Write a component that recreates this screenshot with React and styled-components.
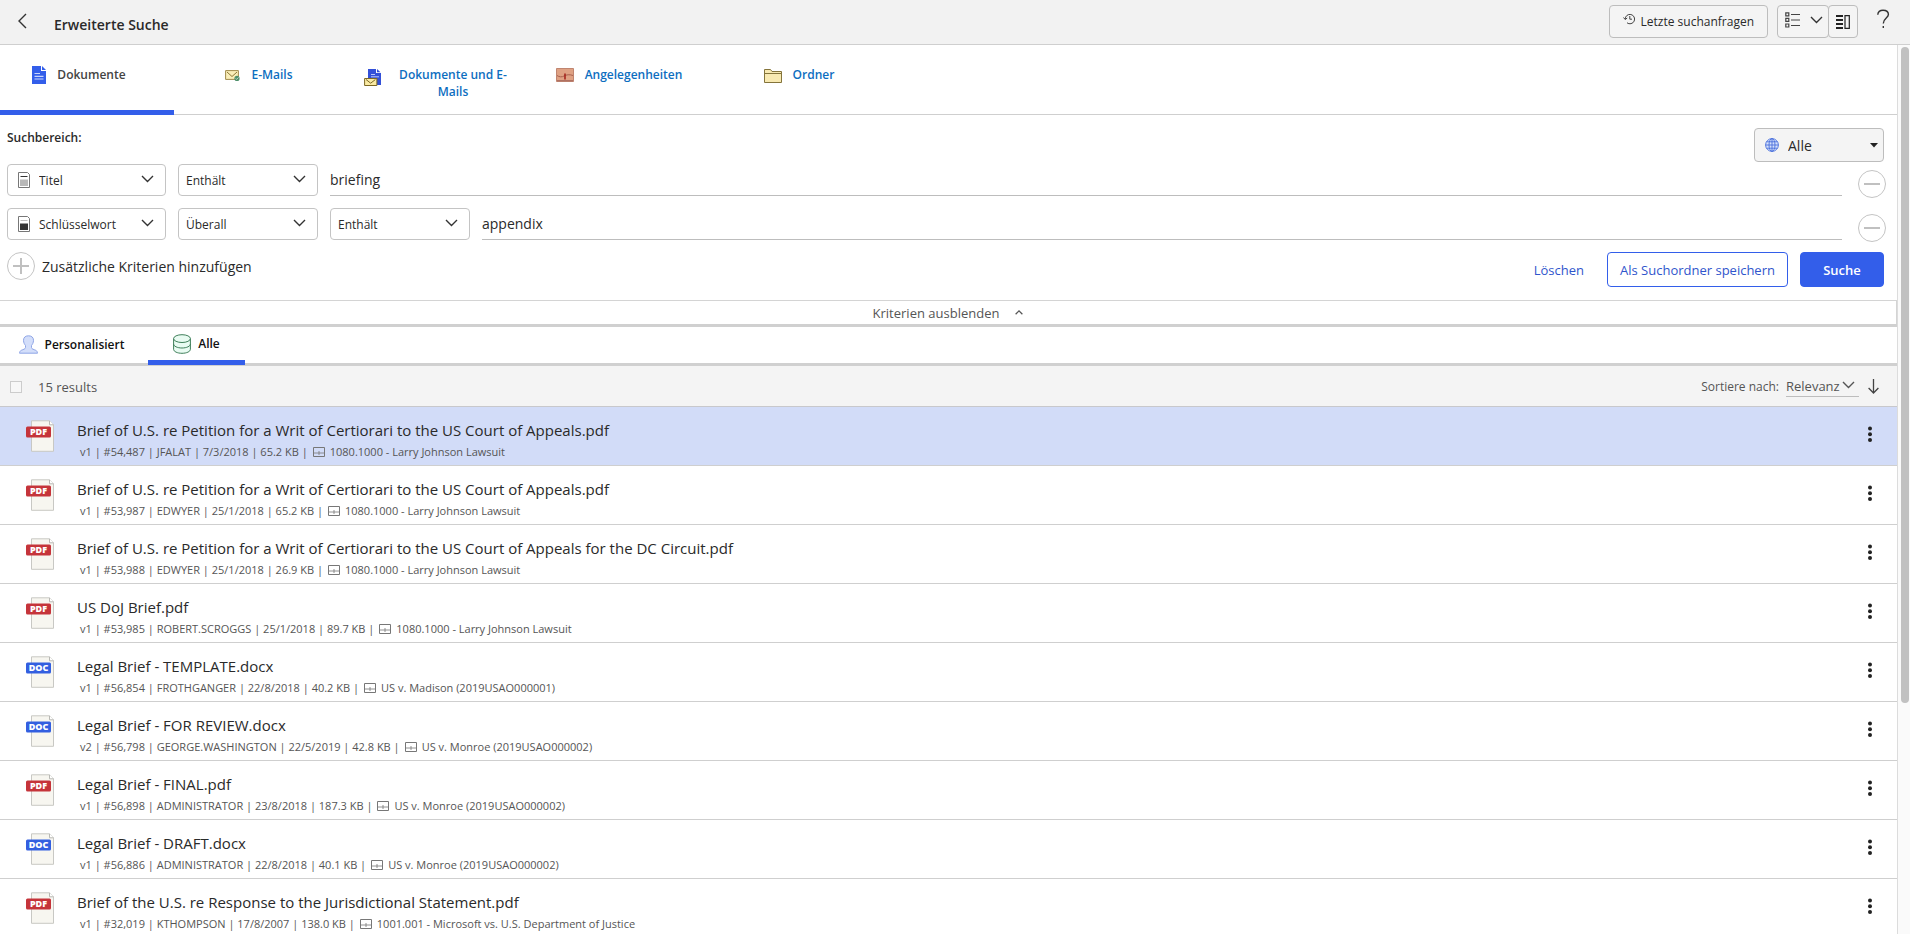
import React, { useState } from 'react';
import styled, { createGlobalStyle, css } from 'styled-components';

const GlobalStyle = createGlobalStyle`
  *,
  *::before,
  *::after {
    box-sizing: border-box;
  }

  body {
    background: #fff;
    color: #2a2a2a;
    font-family: 'Open Sans', 'Noto Sans', sans-serif;
    font-size: 14px;
    margin: 0;
  }

  button,
  input,
  select {
    color: inherit;
    font: inherit;
  }

  button {
    cursor: pointer;
  }

  svg {
    display: block;
    flex: none;
  }
`;

const Page = styled.div`
  display: flex;
  flex-direction: column;
  height: 100vh;
  overflow: hidden;
`;

const Header = styled.header`
  background: #f2f2f2;
  border-bottom: 1px solid #cfcfcf;
  display: flex;
  flex: none;
  height: 45px;
  padding: 5px 19px 0 16px;
`;

const PlainButton = styled.button`
  background: none;
  border: 0;
  padding: 0;
`;

const BackButton = styled(PlainButton)`
  height: 32px;
  width: 12px;
`;

const PageTitle = styled.h1`
  flex: 1;
  font-size: 14px;
  font-weight: 600;
  line-height: 20px;
  margin: 10px 0 0 26px;
`;

const ToolButton = styled.button`
  align-items: center;
  background: #f4f4f4;
  border: 1px solid #bdbdbd;
  border-radius: 4px;
  display: flex;
  font-size: 12px;
  gap: 5px;
  height: 33px;
  justify-content: center;
  padding: 0 ${({ $pad }) => $pad || 6}px;
`;

const ViewButton = styled(ToolButton)`
  gap: 10px;
  padding: 0 5px 4px 7px;
`;

const ToolGroup = styled.div`
  display: flex;
  margin: 0 17px 0 9px;

  > button + button {
    margin-left: -1px;
  }
`;

const HelpButton = styled(PlainButton)`
  height: 28px;
  width: 16px;
`;

const Body = styled.div`
  display: flex;
  flex: 1;
  min-height: 0;
`;

const Main = styled.main`
  border-right: 1px solid #dcdcdc;
  flex: 1;
  min-width: 0;
  overflow: hidden;
`;

const ScrollRail = styled.div`
  background: #fafafa;
  flex: none;
  padding: 2px 1px 0 3px;
  width: 12px;
`;

const ScrollThumb = styled.div`
  background: #c1c1c1;
  border-radius: 4px;
  height: 74%;
`;

const TypeTabs = styled.nav`
  border-bottom: 1px solid #cfcfcf;
  display: flex;
  gap: 6px;
  height: 70px;
`;

const TypeTab = styled(PlainButton)`
  align-items: flex-start;
  color: #0d6ebf;
  display: flex;
  font-size: 12px;
  font-weight: 600;
  gap: 11px;
  height: 70px;
  justify-content: center;
  line-height: 17px;
  padding: 21px 16px 0 0;
  width: 174px;

  ${({ $active }) =>
    $active &&
    css`
      border-bottom: 5px solid #335eea;
      color: #444;
    `}
`;

const TypeLabel = styled.span`
  max-width: 122px;
`;

const Criteria = styled.form`
  padding: 13px 13px 13px 7px;
`;

const ScopeRow = styled.div`
  display: flex;
  height: 36px;
  justify-content: space-between;
`;

const ScopeTitle = styled.div`
  font-size: 12px;
  font-weight: 600;
  line-height: 20px;
`;

const ScopeBox = styled.label`
  align-items: center;
  background: #f4f4f4;
  border: 1px solid #bdbdbd;
  border-radius: 4px;
  display: grid;
  height: 34px;
  width: 130px;

  > * {
    grid-area: 1 / 1;
  }

  > svg {
    pointer-events: none;
  }

  > svg:first-child {
    margin-left: 10px;
  }

  > svg:last-child {
    justify-self: end;
    margin-right: 5px;
  }
`;

const CriteriaRow = styled.div`
  display: flex;
  gap: 12px;
  height: 44px;
`;

const SelectBox = styled.label`
  align-items: center;
  border: 1px solid #c4c4c4;
  border-radius: 4px;
  display: grid;
  flex: none;
  font-size: 12px;
  height: 32px;
  width: ${({ $wide }) => ($wide ? 159 : 140)}px;

  > * {
    grid-area: 1 / 1;
  }

  > svg {
    margin-left: 8px;
    pointer-events: none;
  }

  > svg:last-child {
    justify-self: end;
    margin: 0 11px 3px 0;
  }
`;

const Select = styled.select`
  appearance: none;
  background: none;
  border: 0;
  height: 100%;
  padding: 0 0 0 ${({ $inset }) => $inset || 7}px;
  width: 100%;
`;

const TermInput = styled.input`
  background: none;
  border: 0;
  border-bottom: 1px solid #bdbdbd;
  flex: 1;
  height: 32px;
  min-width: 0;
  outline: 0;
  padding: 0;
`;

const RoundButton = styled.button`
  align-items: center;
  background: #fff;
  border: 1px solid #c4c4c4;
  border-radius: 50%;
  display: flex;
  flex: none;
  height: 28px;
  justify-content: center;
  padding: 0;
  width: 28px;
`;

const RemoveButton = styled(RoundButton)`
  margin: 6px -2px 0 4px;
`;

const ActionRow = styled.div`
  display: flex;
  gap: 12px;
`;

const AddCriterion = styled.div`
  align-items: center;
  display: flex;
  flex: 1;
  gap: 7px;
  height: 28px;
`;

const ActionButton = styled.button`
  background: ${({ $primary }) => ($primary ? '#335eea' : '#fff')};
  border: 1px solid #335eea;
  border-radius: 4px;
  color: ${({ $primary }) => ($primary ? '#fff' : '#2f55cc')};
  font-size: 13px;
  font-weight: ${({ $primary }) => ($primary ? 600 : 400)};
  height: 35px;
  padding: 0;
  width: ${({ $primary }) => ($primary ? 84 : 181)}px;
`;

const ClearButton = styled(PlainButton)`
  color: #2f55cc;
  font-size: 13px;
  margin-right: 11px;
`;

const CollapseBar = styled.button`
  align-items: center;
  background: #fff;
  border: 1px solid #d4d4d4;
  border-bottom: 0;
  border-left: 0;
  color: #555;
  display: flex;
  font-size: 13px;
  gap: 16px;
  height: 24px;
  justify-content: center;
  padding: 0;
  width: 100%;
`;

const ResultTabs = styled.nav`
  border-bottom: 3px solid #d0d0d0;
  border-top: 3px solid #d0d0d0;
  display: flex;
  height: 42px;
`;

const ResultTab = styled(PlainButton)`
  align-items: center;
  color: #111;
  display: flex;
  font-size: 12px;
  font-weight: 600;
  gap: 7px;
  height: 38px;
  justify-content: center;
  padding: 0 5px 4px 0;
  width: ${({ $active }) => ($active ? 97 : 148)}px;

  ${({ $active }) =>
    $active &&
    css`
      border-bottom: 5px solid #335eea;
      padding: 0;
    `}
`;

const ResultBar = styled.div`
  align-items: center;
  background: #f4f4f4;
  border-bottom: 1px solid #c8c8cc;
  color: #555;
  display: flex;
  height: 41px;
  padding: 1px 18px 0 10px;
`;

const SelectAll = styled.input`
  appearance: none;
  background: #f7f7f7;
  border: 1px solid #ccc;
  height: 12px;
  margin: 0 16px 0 0;
  width: 12px;
`;

const ResultCount = styled.span`
  flex: 1;
  font-size: 13px;
`;

const SortLabel = styled.label`
  font-size: 12px;
  margin-right: 7px;
`;

const SortBox = styled.div`
  align-items: center;
  border-bottom: 1px solid #bdbdbd;
  display: grid;
  font-size: 13px;
  height: 21px;
  margin-right: 9px;
  width: 73px;

  > * {
    grid-area: 1 / 1;
  }

  > svg {
    justify-self: end;
    margin: 0 4px 2px 0;
    pointer-events: none;
  }
`;

const SortSelect = styled(Select)`
  padding: 0;
`;

const ResultList = styled.ul`
  list-style: none;
  margin: 0;
  padding: 0;
`;

const ResultItem = styled.li`
  background: ${({ $selected }) => ($selected ? '#d2dcf8' : '#fff')};
  border-bottom: 1px solid #cfcfcf;
  display: flex;
  height: 59px;
  padding: 13px 19px 0 26px;
`;

const ResultText = styled.div`
  flex: 1;
  min-width: 0;
  padding-left: 23px;
`;

const ResultTitle = styled.a`
  color: #2a2a2a;
  display: block;
  font-size: 15px;
  line-height: 20px;
  text-decoration: none;
`;

const ResultMeta = styled.div`
  align-items: center;
  color: #555;
  display: flex;
  font-size: 11px;
  gap: 5px;
  line-height: 16px;
  margin-top: 4px;
  padding-left: 3px;
`;

const MenuButton = styled(PlainButton)`
  height: 28px;
  width: 16px;
`;

const Chevron = ({ size = 13, up, color = '#333' }) => (
  <svg width={size} height={(size * 8) / 13} viewBox="0 0 13 8" fill="none" stroke={color} strokeWidth={size < 10 ? 2 : 1.4}>
    <path d={up ? 'M1 7l5.500-5.500L12 7' : 'M1 1l5.500 5.500L12 1'} />
  </svg>
);

const BackIcon = () => (
  <svg width="12" height="16" viewBox="0 0 12 16" fill="none" stroke="#333" strokeWidth="1.4">
    <path d="M10 1L3 8l7 7" />
  </svg>
);

const HistoryIcon = () => (
  <svg width="13" height="17" viewBox="0 0 13 17" fill="none" stroke="#444">
    <path d="M2.200 6.200A4.700 4.700 0 1 1 4 9.800M.5 4.500l1.700 2 2-1.500M6.800 3v3.200H9" />
  </svg>
);

const ListIcon = () => (
  <svg width="15" height="16" viewBox="0 0 15 16" fill="none" stroke="#444" strokeWidth="1.2">
    <path d="M.8.8h3v3h-3zM.8 6.400h3v3h-3zM.8 12h3v3h-3z" />
    <path d="M6 2.500h9M6 8h9M6 13.500h9" />
  </svg>
);

const PanelIcon = () => (
  <svg width="14" height="14" viewBox="0 0 14 14" fill="none" stroke="#222">
    <path d="M0 1h7M0 5h7M0 9h7M0 13h7" strokeWidth="1.8" />
    <path d="M9 .7h4.300v12.600H9z" strokeWidth="1.2" />
  </svg>
);

const HelpIcon = () => (
  <svg width="16" height="20" viewBox="0 0 16 20" fill="none" stroke="#333" strokeWidth="1.4">
    <path d="M2.800 5.800C2.800 2.800 5 1.200 8 1.200s5.400 1.600 5.400 4.400C13.400 9 8.300 9.400 8.300 14.500M8.300 17v2" />
  </svg>
);

const DocumentIcon = () => (
  <svg width="14" height="18" viewBox="0 0 14 18">
    <path d="M0 0h9v5h5v13H0z" fill="#335eea" />
    <path d="M10 0l4 4h-4z" fill="#335eea" />
    <path d="M2.500 7.500H8M2.500 10.300h9M2.500 13h9" stroke="#c9d5fb" strokeWidth="1.2" />
  </svg>
);

const MailIcon = () => (
  <svg width="15" height="16" viewBox="0 0 15 16">
    <path d="M.6 4.600h12.800v8.800H.6z" fill="#faeeb8" stroke="#a18a4b" />
    <path d="M2 6l5 4.500L12 6" fill="none" stroke="#8b7635" />
    <circle cx="12" cy="12.400" r="2.600" fill="#4e8f6b" />
    <path d="M10.500 12.400l1.200 1 1.800-2" fill="none" stroke="#cfe5d8" strokeWidth=".8" />
  </svg>
);

const DocumentMailIcon = () => (
  <svg width="17" height="20" viewBox="0 0 17 20">
    <path d="M4 3h8v4h5v12H4z" fill="#3350d8" />
    <path d="M13 3l3.500 3.200H13z" fill="#3350d8" />
    <path d="M7 8.500h4M7 10.800h8" stroke="#b9c7fa" />
    <path d="M.6 12.500h12.300v7H.6z" fill="#faeba4" stroke="#7c6724" />
    <path d="M2 13.500l4.700 3.700 4.700-3.700" fill="none" stroke="#7c6724" />
  </svg>
);

const MatterIcon = () => (
  <svg width="18" height="17" viewBox="0 0 18 17">
    <path d="M.5 2.500h17v13H.5z" fill="#dfa183" stroke="#c08570" />
    <path d="M1 9.500c2 1.500 5 1.800 7 .5s6-1.800 9-.5" fill="none" stroke="#a8604e" />
    <path d="M9 7.500v6" stroke="#a6261e" strokeWidth="1.6" />
    <path d="M1 14.700h16" stroke="#a5675a" />
  </svg>
);

const FolderIcon = () => (
  <svg width="18" height="18" viewBox="0 0 18 18">
    <path d="M.5 3.500h6l1.500 2h9.500v11H.5z" fill="#f8e9b1" stroke="#84743b" />
    <path d="M.5 7.500h17" stroke="#84743b" />
  </svg>
);

const FieldIcon = ({ keyword }) => (
  <svg width="16" height="18" viewBox="0 0 16 18">
    <path d="M2.500 1.500h9l2 2v13h-11z" fill="#fff" stroke="#777" />
    <path d="M4.500 5.500h7" stroke={keyword ? '#bbb' : '#333'} />
    <path d="M4 8.500h8V15H4z" fill={keyword ? '#333' : '#b8b8b8'} />
  </svg>
);

const GlobeIcon = () => (
  <svg width="14" height="14" viewBox="0 0 14 14" fill="none" stroke="#4a6fdb" strokeWidth=".9">
    <circle cx="7" cy="7" r="6.400" fill="#d5e1fb" />
    <ellipse cx="7" cy="7" rx="3" ry="6.400" />
    <path d="M7 .6v12.800M.6 7h12.800M1.500 3.800h11M1.500 10.200h11" />
  </svg>
);

const CaretIcon = () => (
  <svg width="8" height="5" viewBox="0 0 8 5">
    <path d="M0 0h8L4 4.500z" fill="#222" />
  </svg>
);

const SignIcon = ({ plus }) => (
  <svg width="16" height="16" viewBox="0 0 16 16" stroke="#c0c0c0" strokeWidth="2">
    <path d={plus ? 'M0 8h16M8 0v16' : 'M0 8h16'} />
  </svg>
);

const PersonIcon = () => (
  <svg width="19" height="19" viewBox="0 0 19 19">
    <path
      d="M9.500.8c3.200 0 5 1.700 5 4.500 0 2.600-1.300 4.300-2 5.200v2c0 1.400 2.200 2 4 2.700 1.300.500 1.800 1.500 2 3H.5c.2-1.500.7-2.500 2-3 1.800-.7 4-1.300 4-2.700v-2c-.7-.9-2-2.600-2-5.200C4.500 2.500 6.300.8 9.500.8z"
      fill="#d3defa"
      stroke="#8fa5e6"
    />
  </svg>
);

const DatabaseIcon = () => (
  <svg width="18" height="20" viewBox="0 0 18 20" fill="#e9fbf2" stroke="#3f7f5a">
    <path d="M.6 4.500v10.800c0 2.200 3.700 4 8.400 4s8.400-1.800 8.400-4V4.500" />
    <ellipse cx="9" cy="4.600" rx="8.400" ry="3.900" />
    <path d="M.6 10c0 2.200 3.700 4 8.400 4s8.400-1.800 8.400-4" fill="none" />
  </svg>
);

const ArrowDownIcon = () => (
  <svg width="11" height="15" viewBox="0 0 11 15" fill="none" stroke="#444" strokeWidth="1.3">
    <path d="M5.500 0v14M.6 9l4.900 5 4.900-5" />
  </svg>
);

const FileIcon = ({ type }) => (
  <svg width="28" height="32" viewBox="0 0 28 32" role="img" aria-label={type}>
    <path d="M5.500.8h18l4 4v26.500h-22z" fill="#f7f6f0" stroke="#c8c8c4" />
    <path d="M23.500.8v4h4" fill="#fff" stroke="#b8b8b4" />
    <rect y="6.500" width="25" height="11" rx="1.500" fill={type === 'PDF' ? '#c5343a' : '#335fe0'} />
    <text x="12.500" y="15.200" fill="#fff" fontSize="9" fontWeight="800" textAnchor="middle">
      {type}
    </text>
  </svg>
);

const WorkspaceIcon = () => (
  <svg width="12" height="10" viewBox="0 0 12 10" fill="none" stroke="#777">
    <path d="M.5.5h11v9H.5z" />
    <path d="M1 6h10M6 4v4" strokeWidth=".8" />
  </svg>
);

const KebabIcon = () => (
  <svg width="16" height="28" viewBox="0 0 16 28" fill="#222">
    <circle cx="8" cy="8.500" r="2" />
    <circle cx="8" cy="14.200" r="2" />
    <circle cx="8" cy="19.900" r="2" />
  </svg>
);

const typeTabs = [
  { label: 'Dokumente', Icon: DocumentIcon },
  { label: 'E-Mails', Icon: MailIcon },
  { label: 'Dokumente und E-Mails', Icon: DocumentMailIcon },
  { label: 'Angelegenheiten', Icon: MatterIcon },
  { label: 'Ordner', Icon: FolderIcon },
];

const results = [
  {
    type: 'PDF',
    title: 'Brief of U.S. re Petition for a Writ of Certiorari to the US Court of Appeals.pdf',
    meta: 'v1 | #54,487 | JFALAT | 7/3/2018 | 65.2 KB |',
    workspace: '1080.1000 - Larry Johnson Lawsuit',
  },
  {
    type: 'PDF',
    title: 'Brief of U.S. re Petition for a Writ of Certiorari to the US Court of Appeals.pdf',
    meta: 'v1 | #53,987 | EDWYER | 25/1/2018 | 65.2 KB |',
    workspace: '1080.1000 - Larry Johnson Lawsuit',
  },
  {
    type: 'PDF',
    title: 'Brief of U.S. re Petition for a Writ of Certiorari to the US Court of Appeals for the DC Circuit.pdf',
    meta: 'v1 | #53,988 | EDWYER | 25/1/2018 | 26.9 KB |',
    workspace: '1080.1000 - Larry Johnson Lawsuit',
  },
  {
    type: 'PDF',
    title: 'US DoJ Brief.pdf',
    meta: 'v1 | #53,985 | ROBERT.SCROGGS | 25/1/2018 | 89.7 KB |',
    workspace: '1080.1000 - Larry Johnson Lawsuit',
  },
  {
    type: 'DOC',
    title: 'Legal Brief - TEMPLATE.docx',
    meta: 'v1 | #56,854 | FROTHGANGER | 22/8/2018 | 40.2 KB |',
    workspace: 'US v. Madison (2019USAO000001)',
  },
  {
    type: 'DOC',
    title: 'Legal Brief - FOR REVIEW.docx',
    meta: 'v2 | #56,798 | GEORGE.WASHINGTON | 22/5/2019 | 42.8 KB |',
    workspace: 'US v. Monroe (2019USAO000002)',
  },
  {
    type: 'PDF',
    title: 'Legal Brief - FINAL.pdf',
    meta: 'v1 | #56,898 | ADMINISTRATOR | 23/8/2018 | 187.3 KB |',
    workspace: 'US v. Monroe (2019USAO000002)',
  },
  {
    type: 'DOC',
    title: 'Legal Brief - DRAFT.docx',
    meta: 'v1 | #56,886 | ADMINISTRATOR | 22/8/2018 | 40.1 KB |',
    workspace: 'US v. Monroe (2019USAO000002)',
  },
  {
    type: 'PDF',
    title: 'Brief of the U.S. re Response to the Jurisdictional Statement.pdf',
    meta: 'v1 | #32,019 | KTHOMPSON | 17/8/2007 | 138.0 KB |',
    workspace: '1001.001 - Microsoft vs. U.S. Department of Justice',
  },
];

const Dropdown = ({ label, value, icon, wide }) => (
  <SelectBox $wide={wide}>
    {icon}
    <Select $inset={icon ? 31 : 7} aria-label={label}>
      <option>{value}</option>
    </Select>
    <Chevron />
  </SelectBox>
);

const Result = ({ result, isSelected, onSelect }) => (
  <ResultItem $selected={isSelected} onClick={onSelect}>
    <FileIcon type={result.type} />
    <ResultText>
      <ResultTitle href="#">{result.title}</ResultTitle>
      <ResultMeta>
        <span>{result.meta}</span>
        <WorkspaceIcon />
        <span>{result.workspace}</span>
      </ResultMeta>
    </ResultText>
    <MenuButton aria-label="Menü">
      <KebabIcon />
    </MenuButton>
  </ResultItem>
);

const App = () => {
  const [selected, setSelected] = useState(0);
  const [title, setTitle] = useState('briefing');
  const [keyword, setKeyword] = useState('appendix');

  return (
    <Page>
      <GlobalStyle />
      <Header>
        <BackButton aria-label="Zurück">
          <BackIcon />
        </BackButton>
        <PageTitle>Erweiterte Suche</PageTitle>
        <ToolButton $pad={13}>
          <HistoryIcon />
          Letzte suchanfragen
        </ToolButton>
        <ToolGroup>
          <ViewButton aria-label="Ansicht">
            <ListIcon />
            <Chevron />
          </ViewButton>
          <ToolButton $pad={7} aria-label="Vorschau">
            <PanelIcon />
          </ToolButton>
        </ToolGroup>
        <HelpButton aria-label="Hilfe">
          <HelpIcon />
        </HelpButton>
      </Header>

      <Body>
        <Main>
          <TypeTabs>
            {typeTabs.map(({ label, Icon }, i) => (
              <TypeTab key={label} $active={i === 0}>
                <Icon />
                <TypeLabel>{label}</TypeLabel>
              </TypeTab>
            ))}
          </TypeTabs>

          <Criteria onSubmit={(e) => e.preventDefault()}>
            <ScopeRow>
              <ScopeTitle>Suchbereich:</ScopeTitle>
              <ScopeBox>
                <GlobeIcon />
                <Select $inset={33} aria-label="Suchbereich">
                  <option>Alle</option>
                </Select>
                <CaretIcon />
              </ScopeBox>
            </ScopeRow>
            <CriteriaRow>
              <Dropdown label="Feld" value="Titel" icon={<FieldIcon />} wide />
              <Dropdown label="Operator" value="Enthält" />
              <TermInput aria-label="Titel" value={title} onChange={(e) => setTitle(e.target.value)} />
              <RemoveButton type="button" aria-label="Entfernen">
                <SignIcon />
              </RemoveButton>
            </CriteriaRow>
            <CriteriaRow>
              <Dropdown label="Feld" value="Schlüsselwort" icon={<FieldIcon keyword />} wide />
              <Dropdown label="Bereich" value="Überall" />
              <Dropdown label="Operator" value="Enthält" />
              <TermInput aria-label="Schlüsselwort" value={keyword} onChange={(e) => setKeyword(e.target.value)} />
              <RemoveButton type="button" aria-label="Entfernen">
                <SignIcon />
              </RemoveButton>
            </CriteriaRow>
            <ActionRow>
              <AddCriterion>
                <RoundButton type="button" aria-labelledby="add-criterion">
                  <SignIcon plus />
                </RoundButton>
                <span id="add-criterion">Zusätzliche Kriterien hinzufügen</span>
              </AddCriterion>
              <ClearButton type="button">Löschen</ClearButton>
              <ActionButton type="button">Als Suchordner speichern</ActionButton>
              <ActionButton $primary>Suche</ActionButton>
            </ActionRow>
          </Criteria>

          <CollapseBar>
            Kriterien ausblenden
            <Chevron size={8} up color="#555" />
          </CollapseBar>

          <ResultTabs>
            <ResultTab>
              <PersonIcon />
              Personalisiert
            </ResultTab>
            <ResultTab $active>
              <DatabaseIcon />
              Alle
            </ResultTab>
          </ResultTabs>

          <ResultBar>
            <SelectAll type="checkbox" aria-label="Alle auswählen" />
            <ResultCount>15 results</ResultCount>
            <SortLabel htmlFor="sort">Sortiere nach:</SortLabel>
            <SortBox>
              <SortSelect id="sort">
                <option>Relevanz</option>
              </SortSelect>
              <Chevron color="#555" />
            </SortBox>
            <PlainButton aria-label="Absteigend">
              <ArrowDownIcon />
            </PlainButton>
          </ResultBar>

          <ResultList>
            {results.map((result, i) => (
              <Result
                key={result.meta}
                result={result}
                isSelected={i === selected}
                onSelect={() => setSelected(i)}
              />
            ))}
          </ResultList>
        </Main>
        <ScrollRail>
          <ScrollThumb />
        </ScrollRail>
      </Body>
    </Page>
  );
};

export default App;
